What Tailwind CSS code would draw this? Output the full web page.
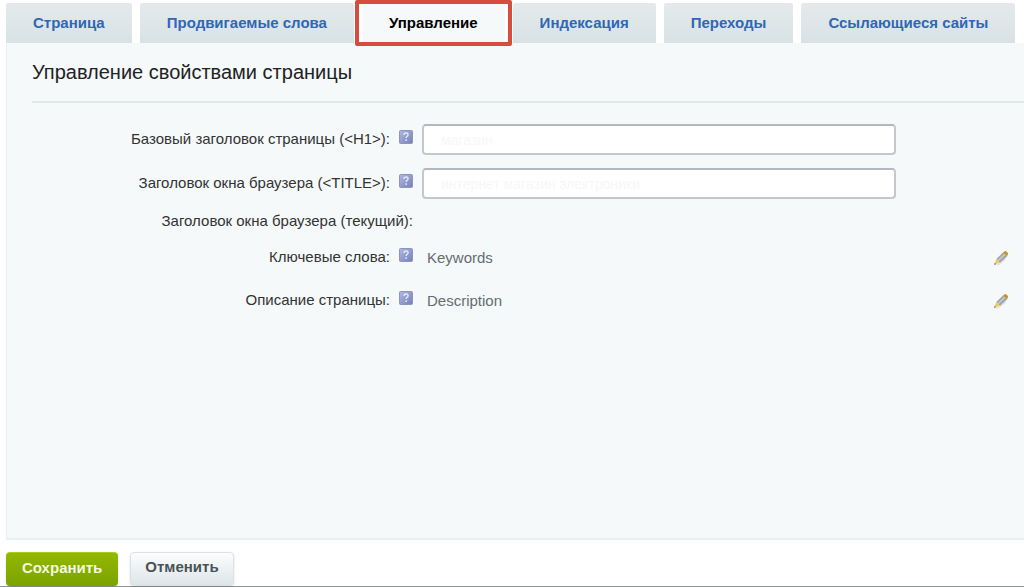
<!DOCTYPE html>
<html lang="ru">
<head>
<meta charset="utf-8">
<meta name="viewport" content="width=device-width, initial-scale=1">
<title>Управление свойствами страницы</title>
<script src="https://cdn.jsdelivr.net/npm/@tailwindcss/browser@4"></script>
</head>
<body class="min-h-screen overflow-hidden bg-white font-['Liberation_Sans',Arial,sans-serif] text-[15px] text-[#3c4142]">
<svg class="block size-0" aria-hidden="true">
  <defs>
    <linearGradient id="helpFill" x1="0" y1="0" x2="1" y2="1">
      <stop offset="0" stop-color="#b0b8e0"/><stop offset="1" stop-color="#7680b8"/>
    </linearGradient>
    <symbol id="help" viewBox="0 0 14 14">
      <rect x=".5" y=".5" width="13" height="13" rx="1" fill="url(#helpFill)" stroke="#8c95bd"/>
      <path d="M5 5.100c0-1.400.9-2.100 2.100-2.100s2 .7 2 1.800c0 1.500-1.900 1.600-1.900 3.200" fill="none" stroke="#e4e8fa" stroke-width="1.400"/>
      <rect x="6.400" y="9.300" width="1.600" height="1.600" fill="#e4e8fa"/>
    </symbol>
    <symbol id="pencil" viewBox="0 0 16 16">
      <path d="M3 15.300 6.500 14l6-5" fill="none" stroke="#dde1e2" stroke-width="1.200"/>
      <path d="M3.300 9 10 2.600l4 3.800-7.200 6.600z" fill="#a2a4a8"/>
      <path d="M4.500 10.100 11.200 3.700l1.200 1.200-6.700 6.300z" fill="#c4c6c9"/>
      <path d="M10 2.600 11.800 1.300q.6-.4 1.300 0l1.600 1.400q.6.700.2 1.500l-.9 2.200z" fill="#c3942c"/>
      <path d="M3.300 9 1.200 14.500 6.800 13z" fill="#f0cb5e"/>
      <path d="m1.800 12.900-.8 1.800 2-.5z" fill="#6a5a38"/>
    </symbol>
  </defs>
</svg>

<nav class="flex gap-2 pt-[3px] pl-[6px] font-bold whitespace-nowrap text-[#2f67b4]" aria-label="Разделы">
  <a href="#page" class="h-10 rounded-t-xs bg-linear-to-b from-[#e4eaeb] to-[#d8e2e5] px-[27px] leading-10">Страница</a>
  <a href="#words" class="h-10 rounded-t-xs bg-linear-to-b from-[#e4eaeb] to-[#d8e2e5] px-[27px] leading-10">Продвигаемые слова</a>
  <a href="#manage" aria-current="page" class="relative h-10 bg-[#f5f9fa] px-[27px] leading-10 text-black">Управление<span class="absolute -inset-x-[7px] -top-[3px] -bottom-[3px] rounded-xs border-4 border-[#d84b3f]"></span></a>
  <a href="#index" class="h-10 rounded-t-xs bg-linear-to-b from-[#e4eaeb] to-[#d8e2e5] px-[27px] leading-10">Индексация</a>
  <a href="#visits" class="h-10 rounded-t-xs bg-linear-to-b from-[#e4eaeb] to-[#d8e2e5] px-[27px] leading-10">Переходы</a>
  <a href="#links" class="h-10 rounded-t-xs bg-linear-to-b from-[#e4eaeb] to-[#d8e2e5] px-[27px] leading-10">Ссылающиеся сайты</a>
</nav>

<form>
  <main class="ml-[6px] border-b-2 border-l border-[#e6f0f1] bg-[#f5f9fa] pb-[227px] pl-[25px]">
    <h1 class="border-b-2 border-[#e2e8ea] pt-4 pb-4 text-xl leading-[26px] text-[#222]">Управление свойствами страницы</h1>
    <div class="grid grid-cols-[381px_1fr] gap-x-[9px] pt-[21px] text-[#333]">
      <div class="flex h-11 items-start justify-end gap-[9px] pt-[6px]">
        <label for="h1" class="leading-[18px]">Базовый заголовок страницы (&lt;H1&gt;):</label>
        <button type="button" aria-label="Справка: базовый заголовок"><svg class="size-[14px]"><use href="#help"/></svg></button>
      </div>
      <div class="pr-32"><input id="h1" type="text" placeholder="магазин" class="block h-[31px] w-full rounded-sm border-2 border-[#c3c8cc] border-t-[#b3b9be] bg-white px-[17px] text-sm placeholder:text-[#f7f7f7]"></div>

      <div class="flex h-11 items-start justify-end gap-[9px] pt-[6px]">
        <label for="title" class="leading-[18px]">Заголовок окна браузера (&lt;TITLE&gt;):</label>
        <button type="button" aria-label="Справка: заголовок окна"><svg class="size-[14px]"><use href="#help"/></svg></button>
      </div>
      <div class="pr-32"><input id="title" type="text" placeholder="интернет магазин электроники" class="block h-[31px] w-full rounded-sm border-2 border-[#c3c8cc] border-t-[#b3b9be] bg-white px-[17px] text-sm placeholder:text-[#f7f7f7]"></div>

      <div class="h-9 text-right leading-[18px]">Заголовок окна браузера (текущий):</div>
      <div></div>

      <div class="flex h-[43px] items-start justify-end gap-[9px]">
        <span class="leading-[18px]">Ключевые слова:</span>
        <button type="button" aria-label="Справка: ключевые слова"><svg class="size-[14px]"><use href="#help"/></svg></button>
      </div>
      <div class="flex items-start justify-between pr-[15px] pl-[5px] text-[#666d70]">
        <span class="leading-5">Keywords</span>
        <button type="button" class="pt-[2px]" aria-label="Изменить ключевые слова"><svg class="size-4"><use href="#pencil"/></svg></button>
      </div>

      <div class="flex items-start justify-end gap-[9px]">
        <span class="leading-[18px]">Описание страницы:</span>
        <button type="button" aria-label="Справка: описание"><svg class="size-[14px]"><use href="#help"/></svg></button>
      </div>
      <div class="flex items-start justify-between pr-[15px] pl-[5px] text-[#666d70]">
        <span class="leading-5">Description</span>
        <button type="button" class="pt-[2px]" aria-label="Изменить описание"><svg class="size-4"><use href="#pencil"/></svg></button>
      </div>
    </div>
  </main>
  <footer class="flex gap-3 border-b border-[#8f9496] pt-3 pl-[6px] font-bold">
    <button type="submit" class="h-[34px] rounded-sm border-t border-[#a9cc1c] bg-linear-to-b from-[#93b800] to-[#7ba300] px-4 pb-[3px] text-[#f4f9df] shadow-sm">Сохранить</button>
    <button type="reset" class="h-[34px] rounded-sm border border-[#dbe1e4] bg-linear-to-b from-[#fcfdfd] to-[#dde5e9] px-[14px] pb-[3px] text-[#4a5255] shadow-sm">Отменить</button>
  </footer>
</form>
</body>
</html>
